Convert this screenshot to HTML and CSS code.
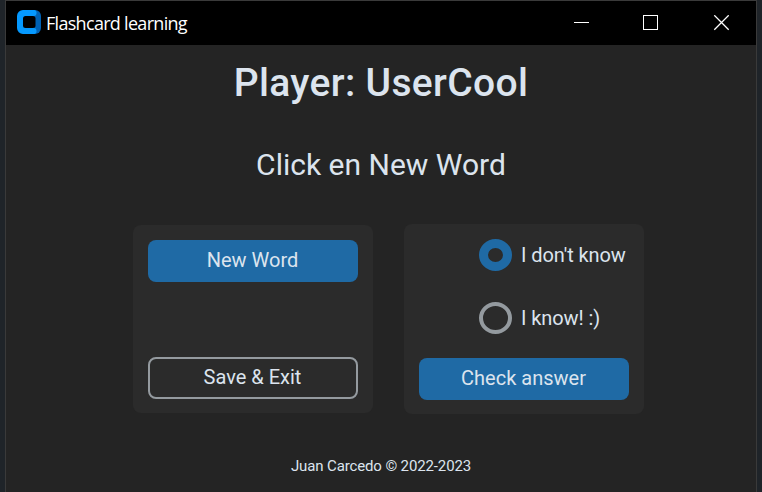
FILE: index.html
```html
<!DOCTYPE html>
<html lang="en">
<head>
<meta charset="utf-8">
<title>Flashcard learning</title>
<link rel="stylesheet" href="styles.css">
</head>
<body>
<div class="window">
  <header class="titlebar">
    <svg class="logo" width="24" height="24" viewBox="0 0 24 24">
      <path d="M16 0h2a6 6 0 0 1 6 6v12a6 6 0 0 1-6 6h-2z" fill="#0062b5"/>
      <path d="M6 0H17a2.5 2.5 0 0 1 2.500 3c0 2-1 3-2.500 3v12c1.500 0 2.500 1 2.500 3a2.500 2.500 0 0 1-2.500 3H6a6 6 0 0 1-6-6V6a6 6 0 0 1 6-6z" fill="#0599ff"/>
      <rect x="6" y="6" width="12.500" height="12" rx="2.500" fill="#000"/>
    </svg>
    <span class="caption">Flashcard learning</span>
    <svg class="controls" width="156" height="16" viewBox="0 0 156 16" fill="none" stroke="#fff">
      <path d="M0 7.500h15"/>
      <rect x="69.500" y=".5" width="14" height="14"/>
      <path d="M140.300.3l14.400 14.400M154.700.3l-14.400 14.400" stroke-width="1.300"/>
    </svg>
  </header>
  <main class="content">
    <h1>Player: UserCool</h1>
    <h2>Click en New Word</h2>
    <div class="panels">
      <section class="panel actions">
        <button class="btn">New Word</button>
        <button class="btn outline">Save &amp; Exit</button>
      </section>
      <section class="panel answers">
        <label class="radio"><span class="dot checked"></span><span>I don't know</span></label>
        <label class="radio"><span class="dot"></span><span>I know! :)</span></label>
        <button class="btn">Check answer</button>
      </section>
    </div>
    <footer>Juan Carcedo © 2022-2023</footer>
  </main>
</div>
</body>
</html>
```
FILE: styles.css
```css
* { box-sizing: border-box; }
body {
  margin: 0;
  height: 492px;
  overflow: hidden;
  padding: 0 5px;
  background: #1f2429;
  font-family: Roboto, sans-serif;
  color: #dce4ee;
}
.window {
  height: 493px;
  border: 1px solid #3a3a3a;
  background: #242424;
}
.titlebar {
  height: 44px;
  background: #000;
  display: flex;
  align-items: center;
  padding: 0 26px 0 11px;
}
.logo { margin-bottom: 2px; }
.caption {
  margin-left: 5px;
  font: 18px "Open Sans", sans-serif;
  letter-spacing: -0.7px;
  color: #fff;
  white-space: nowrap;
}
.controls { margin-left: auto; }
.content {
  display: flex;
  flex-direction: column;
  align-items: center;
  padding-top: 14px;
}
h1, h2 { margin: 0; white-space: nowrap; }
h1 { font-weight: 500; font-size: 39px; line-height: 48px; letter-spacing: 0.35px; }
h2 { margin-top: 40px; font-weight: 400; font-size: 30px; line-height: 36px; }
.panels {
  display: flex;
  align-items: flex-start;
  gap: 31px;
  margin: 41px 0 0 15px;
}
.panel {
  width: 240px;
  border-radius: 8px;
  background: #2b2b2b;
  padding: 15px 15px 14px;
  display: flex;
  flex-direction: column;
}
.actions { height: 188px; margin-top: 1px; justify-content: space-between; }
.answers { height: 190px; }
.btn {
  width: 210px;
  height: 42px;
  flex: none;
  border: 0;
  border-radius: 8px;
  padding: 0 1px 2px 0;
  background: #1f6aa5;
  color: #dce4ee;
  font: 20px Roboto, sans-serif;
}
.outline { border: 2px solid #949a9f; background: transparent; }
.radio {
  display: flex;
  flex: none;
  align-items: center;
  height: 32px;
  margin: 0 0 31px 60px;
  font-size: 20px;
  letter-spacing: -0.08px;
  white-space: nowrap;
}
.radio + .btn { margin-top: -7px; }
.dot {
  width: 33px;
  height: 32px;
  margin-right: 9px;
  border: 4px solid #949a9f;
  border-radius: 50%;
}
.checked { border: 9px solid #1f6aa5; }
footer { margin-top: 43px; font-size: 15px; line-height: 18px; letter-spacing: -0.13px; }
```
